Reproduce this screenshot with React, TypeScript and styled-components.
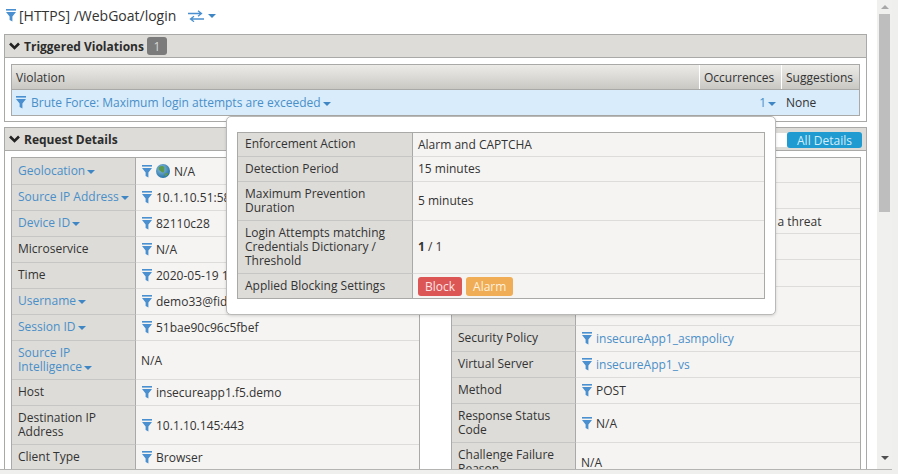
import React from "react";
import styled, { createGlobalStyle } from "styled-components";

const Global = createGlobalStyle`
  html, body { margin: 0; padding: 0; background: #efefed; overflow: hidden; }
  body { font-family: "Open Sans", "Noto Sans", sans-serif; font-size: 12px; color: #333; }
`;

const Frame = styled.div`
  width: 892px; height: 470px; display: flex; overflow: hidden; position: relative;
  border-bottom: 1px solid #b4b4b2; box-sizing: border-box; background: #fff;
`;
const Content = styled.div`
  width: 877px; flex: none; height: 100%; overflow: hidden; padding: 0 10px 0 4px; box-sizing: border-box; position: relative;
`;
const Title = styled.div`
  height: 34px; display: flex; align-items: center; padding-left: 2px; font-size: 14px; color: #333; box-sizing: border-box; padding-bottom: 3px;
`;
const TitleText = styled.span` margin-left: 3px; `;
const SwapWrap = styled.span` margin-left: 12px; display: inline-flex; align-items: center; gap: 2px; `;
const Panel = styled.section<{ $mb?: number }>`
  border: 1px solid #a9a9a7; margin-bottom: ${(p) => p.$mb ?? 0}px; background: #fff; width: 863px; box-sizing: border-box;
`;
const PanelHead = styled.header`
  height: 23px; box-sizing: border-box; background: #dddcd8; border-bottom: 1px solid #a9a9a7; display: flex; align-items: center;
  padding-left: 4px; font-weight: 700; font-size: 12px; color: #2c2c2c; gap: 4px; position: relative;
`;
const Count = styled.span`
  background: #7b7b7b; color: #d8d8d8; font-weight: 400; border-radius: 3px; width: 20px; height: 18px;
  display: inline-flex; align-items: center; justify-content: center; margin-left: -1px;
`;
const ViolBody = styled.div` padding: 6px 6px 5px; `;
const VTable = styled.div` border: 1px solid #a9a9a7; width: 849px; box-sizing: border-box; `;
const VHeadRow = styled.div`
  display: grid; grid-template-columns: 688px 82px 1fr; height: 25px; box-sizing: border-box;
  border-bottom: 1px solid #a9a9a7; background: linear-gradient(#ecebe8, #c9c8c3);
`;
const VHeadCell = styled.div`
  display: flex; align-items: center; padding-left: 4px; border-right: 1px solid #fff; color: #333;
  &:last-child { border-right: 0; }
`;
const VRow = styled.div`
  display: grid; grid-template-columns: 688px 82px 1fr; height: 25px; background: #d8ecfb;
`;
const VCell = styled.div<{ $end?: boolean }>`
  display: flex; align-items: center; padding-left: 4px;
  justify-content: ${(p) => (p.$end ? "flex-end" : "flex-start")};
  gap: 5px; padding-right: ${(p) => (p.$end ? 6 : 0)}px;
`;
const Link = styled.span` color: #4a8fc8; `;
const Tables = styled.div` display: flex; padding: 6px 6px 0; gap: 31px; align-items: flex-start; `;
const Col = styled.div<{ $w: number; $label: number }>`
  width: ${(p) => p.$w}px; flex: none; box-sizing: border-box;
  border: 1px solid #a9a9a7; display: grid; grid-template-columns: ${(p) => p.$label}px 1fr;
`;
const Label = styled.div<{ $h: number }>`
  height: ${(p) => p.$h}px; box-sizing: border-box; background: #dddcd8; border-right: 1px solid #a9a9a7; border-bottom: 1px solid #c6c6c4;
  padding: 0 0 1px 6px; display: flex; align-items: center; line-height: 14px; color: #333;
`;
const Value = styled.div<{ $h: number; $bare?: boolean }>`
  height: ${(p) => p.$h}px; box-sizing: border-box; background: #f5f4f2; border-bottom: 1px solid #dddcda;
  padding: 0 5px 0 ${(p) => (p.$bare ? 5 : 6)}px; display: flex; align-items: center; gap: 4px; white-space: nowrap; overflow: hidden; color: #333;
`;
const Caret = styled.span`
  display: inline-block; width: 0; height: 0; border-left: 4px solid transparent; border-right: 4px solid transparent;
  border-top: 4px solid #3f86c4; margin-left: 2px; vertical-align: 1px;
`;
const AllDetails = styled.button`
  position: absolute; right: 4px; top: 4px; width: 75px; height: 16px; border: 0; border-radius: 3px; background: #1f9bd1; color: #d3edf8;
  font: 12px "Open Sans", sans-serif; padding: 0;
`;
const Search = styled.span`
  position: absolute; right: 79px; top: 5px; width: 100px; height: 14px; background: #fff;
`;
const Popover = styled.div`
  position: absolute; left: 226px; top: 116px; width: 550px; height: 199px; box-sizing: border-box; background: #fff;
  border: 1px solid #b9b9b7; border-radius: 5px; box-shadow: 0 1px 3px rgba(0,0,0,.15); padding: 15px 10px 0;
`;
const PopTable = styled.div`
  border: 1px solid #a9a9a7; display: grid; grid-template-columns: 175px 1fr; width: 528px; box-sizing: border-box;
`;
const PopLabel = styled(Label)` padding: 0 7px 1px; &:nth-last-child(2) { padding-bottom: 0; border-bottom: 0; } `;
const PopValue = styled(Value)` padding: 0 5px 1px; gap: 4px; &:last-child { padding-bottom: 0; border-bottom: 0; } `;
const Tag = styled.span<{ $bg: string; $fg: string }>`
  background: ${(p) => p.$bg}; color: ${(p) => p.$fg}; border-radius: 3px; height: 19px; padding: 0 7px; display: inline-flex; align-items: center;
`;
const Track = styled.div`
  width: 15px; flex: none; height: 100%; background: #f0f0ee; position: relative; display: flex; flex-direction: column; align-items: center;
`;
const Arrow = styled.span<{ $up?: boolean }>`
  width: 0; height: 0; border-left: 4px solid transparent; border-right: 4px solid transparent; margin-top: ${(p) => (p.$up ? 5 : 0)}px;
  ${(p) => (p.$up ? "border-bottom: 4px solid #a8a8a8;" : "border-top: 4px solid #505050;")}
`;
const Thumb = styled.div` width: 11px; height: 198px; background: #bebebe; margin-top: 5px; margin-bottom: 244px; `;
const Stars = styled.span` display: inline-block; width: 89px; flex: none; `;

const Filter = () => (
  <svg width="10" height="13" viewBox="0 0 10 13" style={{ flex: "none" }}>
    <rect x="0" y="0" width="10" height="1.6" fill="#4a90d0" />
    <path d="M0 3 H10 L6.4 7.5 V12.5 L3.6 11 V7.5 Z" fill="#4a90d0" />
  </svg>
);
const Globe = () => (
  <svg width="14" height="14" viewBox="0 0 14 14" style={{ flex: "none" }}>
    <defs>
      <radialGradient id="g" cx="40%" cy="35%" r="70%">
        <stop offset="0" stopColor="#8fc2e0" />
        <stop offset="1" stopColor="#1f6ea5" />
      </radialGradient>
    </defs>
    <circle cx="7" cy="7" r="7" fill="url(#g)" />
    <path d="M3 3 C5 1.5 8 2 8.5 3.5 C8 5 9 7 7.5 8.5 C5.5 9 5 7 3.5 6.5 C2.5 5.5 2.5 4 3 3 Z" fill="#5e9a4e" />
    <path d="M9 9.5 C10.5 8.5 12 9 12 10 C11 12 9.5 12.5 9 12 Z" fill="#5e9a4e" />
  </svg>
);
const Chevron = () => (
  <svg width="11" height="8" viewBox="0 0 11 8" style={{ flex: "none" }}>
    <path d="M1 1.5 L5.5 6 L10 1.5" fill="none" stroke="#222" strokeWidth="2.6" />
  </svg>
);
const Swap = () => (
  <svg width="16" height="12" viewBox="0 0 16 12">
    <path d="M0 3.5 H13 M10 0.8 L13.5 3.5 L10 6.2" fill="none" stroke="#4a90d0" strokeWidth="1.3" />
    <path d="M16 9 H3 M6 6.3 L2.5 9 L6 11.7" fill="none" stroke="#4a90d0" strokeWidth="1.3" />
  </svg>
);

type Row = { l: string; link?: boolean; v?: React.ReactNode; f?: boolean; h: number; vl?: boolean };

const left: Row[] = [
  { l: "Geolocation", link: true, f: true, h: 27, v: <><Globe /><span>N/A</span></> },
  { l: "Source IP Address", link: true, f: true, h: 26, v: "10.1.10.51:58124" },
  { l: "Device ID", link: true, f: true, h: 26, v: "82110c28" },
  { l: "Microservice", f: true, h: 26, v: "N/A" },
  { l: "Time", f: true, h: 26, v: "2020-05-19 10:22:41" },
  { l: "Username", link: true, f: true, h: 26, v: "demo33@fidelity.demo" },
  { l: "Session ID", link: true, f: true, h: 26, v: "51bae90c96c5fbef" },
  { l: "Source IP Intelligence", link: true, h: 39, v: "N/A" },
  { l: "Host", f: true, h: 26, v: "insecureapp1.f5.demo" },
  { l: "Destination IP Address", f: true, h: 39, v: "10.1.10.145:443" },
  { l: "Client Type", f: true, h: 26, v: "Browser" },
];
const right: Row[] = [
  { l: "Support ID", h: 25, v: "" },
  { l: "Request Status", h: 26, v: "Alerted" },
  { l: "Violation Rating", h: 25, v: <><Stars /><span>Request looks like a threat</span></> },
  { l: "Attack Types", h: 26, v: "" },
  { l: "Protocol", h: 27, v: "" },
  { l: "Blocking Reason", h: 39, v: "" },
  { l: "Security Policy", f: true, vl: true, h: 26, v: "insecureApp1_asmpolicy" },
  { l: "Virtual Server", f: true, vl: true, h: 26, v: "insecureApp1_vs" },
  { l: "Method", f: true, h: 26, v: "POST" },
  { l: "Response Status Code", f: true, h: 39, v: "N/A" },
  { l: "Challenge Failure Reason", h: 39, v: "N/A" },
];
const pop: { l: string; h: number; v: React.ReactNode }[] = [
  { l: "Enforcement Action", h: 24, v: "Alarm and CAPTCHA" },
  { l: "Detection Period", h: 25, v: "15 minutes" },
  { l: "Maximum Prevention Duration", h: 39, v: "5 minutes" },
  { l: "Login Attempts matching Credentials Dictionary / Threshold", h: 53, v: <span><b>1</b> / 1</span> },
  {
    l: "Applied Blocking Settings", h: 24,
    v: <><Tag $bg="#dc5656" $fg="#fbe3e3">Block</Tag><Tag $bg="#f0ad55" $fg="#fdf1df">Alarm</Tag></>,
  },
];

const Cells = ({ rows }: { rows: Row[] }) => (
  <>
    {rows.map((r) => (
      <React.Fragment key={r.l}>
        <Label $h={r.h}>
          {r.link ? <Link><span>{r.l}</span><Caret /></Link> : r.l}
        </Label>
        <Value $h={r.h} $bare={!r.f}>
          {r.f && <Filter />}
          {r.vl ? <Link>{r.v}</Link> : r.v}
        </Value>
      </React.Fragment>
    ))}
  </>
);

export default function App() {
  return (
    <>
      <Global />
      <Frame>
        <Content>
          <Title>
            <Filter />
            <TitleText>[HTTPS] /WebGoat/login</TitleText>
            <SwapWrap><Swap /><Caret /></SwapWrap>
          </Title>
          <Panel $mb={5}>
            <PanelHead>
              <Chevron />
              <span>Triggered Violations</span>
              <Count>1</Count>
            </PanelHead>
            <ViolBody>
              <VTable>
                <VHeadRow>
                  <VHeadCell>Violation</VHeadCell>
                  <VHeadCell>Occurrences</VHeadCell>
                  <VHeadCell>Suggestions</VHeadCell>
                </VHeadRow>
                <VRow>
                  <VCell>
                    <Filter />
                    <Link>Brute Force: Maximum login attempts are exceeded<Caret /></Link>
                  </VCell>
                  <VCell $end><Link>1<Caret /></Link></VCell>
                  <VCell>None</VCell>
                </VRow>
              </VTable>
            </ViolBody>
          </Panel>
          <Panel>
            <PanelHead>
              <Chevron />
              <span>Request Details</span>
              <Search />
              <AllDetails>All Details</AllDetails>
            </PanelHead>
            <Tables>
              <Col $w={409} $label={124}><Cells rows={left} /></Col>
              <Col $w={410} $label={124}><Cells rows={right} /></Col>
            </Tables>
          </Panel>
          <Popover>
            <PopTable>
              {pop.map((r) => (
                <React.Fragment key={r.l}>
                  <PopLabel $h={r.h}>{r.l}</PopLabel>
                  <PopValue $h={r.h}>{r.v}</PopValue>
                </React.Fragment>
              ))}
            </PopTable>
          </Popover>
        </Content>
        <Track>
          <Arrow $up />
          <Thumb />
          <Arrow />
        </Track>
      </Frame>
    </>
  );
}
